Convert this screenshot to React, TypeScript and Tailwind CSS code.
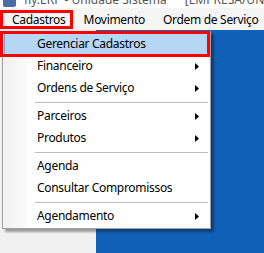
import { ReactNode } from "react";

const font = { fontFamily: '"Noto Sans", "Open Sans", sans-serif' };

function Arrow() {
  return (
    <svg viewBox="0 0 4 7" className="h-[7px] w-[4px] text-black" aria-hidden>
      <path d="M0 0 L4 3.5 L0 7 Z" fill="currentColor" />
    </svg>
  );
}

function Item({
  label,
  sub,
  active,
}: {
  label: string;
  sub?: boolean;
  active?: boolean;
}) {
  return (
    <div
      className={
        "flex h-[22px] items-center pr-[11px] text-[12px] tracking-[-0.3px] text-black " +
        (active
          ? "mx-[1px] border-l border-[#6fa8dc] bg-[#b6d7f3] pl-[32px]"
          : "pl-[34px]")
      }
    >
      <span className="flex-1 whitespace-nowrap leading-none">{label}</span>
      {sub && <Arrow />}
    </div>
  );
}

function Sep() {
  return (
    <div className="flex h-[6px] items-center pl-[32px] pr-[2px]">
      <div className="h-px w-full bg-[#bdbdbd]" />
    </div>
  );
}

function MenuBarItem({ children }: { children: ReactNode }) {
  return <div className="whitespace-nowrap px-[9px] leading-none">{children}</div>;
}

export default function App() {
  return (
    <div
      className="relative h-[253px] w-[264px] overflow-hidden bg-[#f0f0f0]"
      style={font}
    >
      {/* window title, cut off at the top */}
      <div className="relative h-[8px] overflow-hidden bg-white">
        <div className="absolute left-0 top-[-9px] flex items-center gap-[8px] whitespace-nowrap text-[12px] text-[#555]">
          <div className="ml-[3px] h-[14px] w-[13px] rounded-[2px] bg-[#4a6da8]" />
          <span>fly.ERP - Unidade Sistema</span>
          <span className="ml-[10px]">[EMPRESA/UNIDADE]</span>
        </div>
      </div>

      {/* menu bar */}
      <div className="flex h-[22px] items-center bg-[#f5f5f5] pl-[3px] pt-[2px] text-[12px] tracking-[-0.3px] text-black">
        <MenuBarItem>Cadastros</MenuBarItem>
        <MenuBarItem>Movimento</MenuBarItem>
        <MenuBarItem>Ordem de Serviço</MenuBarItem>
      </div>

      {/* desktop area */}
      <div className="flex h-[223px]">
        <div className="w-[96px]" />
        <div className="flex-1 bg-[#1160b7]" />
      </div>

      {/* dropdown */}
      <div className="absolute left-[2px] top-[31px] w-[209px] border border-[#a0a0a0] bg-white py-[1px] shadow-[3px_3px_2px_rgba(0,0,0,0.35)]">
        <div className="absolute bottom-0 left-0 top-0 w-[25px] bg-gradient-to-r from-[#f1f1f1] to-[#fbfbfb]" />
        <div className="relative">
          <Item label="Gerenciar Cadastros" active />
          <Item label="Financeiro" sub />
          <Item label="Ordens de Serviço" sub />
          <Sep />
          <Item label="Parceiros" sub />
          <Item label="Produtos" sub />
          <Sep />
          <Item label="Agenda" />
          <Item label="Consultar Compromissos" />
          <Sep />
          <Item label="Agendamento" sub />
        </div>
      </div>

      {/* red annotation boxes */}
      <div className="absolute left-0 top-[10px] h-[19px] w-[73px] border-[3px] border-[#ff0000]" />
      <div className="absolute left-0 top-[31px] h-[26px] w-[210px] border-[3px] border-[#ff0000]" />
    </div>
  );
}
